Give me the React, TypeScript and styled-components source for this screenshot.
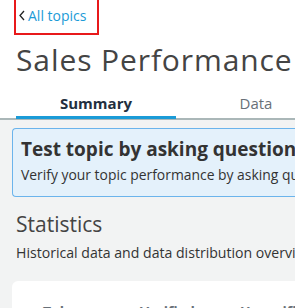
import React from 'react';
import styled, { createGlobalStyle } from 'styled-components';

const GlobalStyle = createGlobalStyle`
  html, body {
    margin: 0;
    padding: 0;
    background: #f2f3f3;
    font-family: 'Open Sans', 'Noto Sans', sans-serif;
    overflow: hidden;
  }
`;

const Page = styled.div`
  width: 295px;
  height: 308px;
  overflow: hidden;
`;

const Header = styled.header`
  background: #ffffff;
  padding: 0 0 0 16px;
  border-bottom: 2px solid #aab7b8;
  white-space: nowrap;
`;

const BackLink = styled.a`
  display: inline-flex;
  align-items: center;
  gap: 3px;
  margin-left: -2px;
  padding: 5px 11px 7px 3px;
  border: 2px solid #e8191b;
  border-top: none;
  color: #1b9bd7;
  font-size: 14px;
  line-height: 21px;
  text-decoration: none;
`;

const Title = styled.h1`
  margin: 7px 0 0;
  font-size: 30px;
  font-weight: 400;
  letter-spacing: 0.9px;
  line-height: 36px;
  color: #444444;
`;

const Tabs = styled.div`
  display: flex;
  margin-top: 15px;
`;

const Tab = styled.div<{ $active?: boolean }>`
  flex: 0 0 160px;
  text-align: center;
  font-size: 15px;
  line-height: 20px;
  font-weight: ${(p) => (p.$active ? 700 : 400)};
  color: ${(p) => (p.$active ? '#232f3e' : '#687078')};
  padding-bottom: 3px;
  border-bottom: 3px solid ${(p) => (p.$active ? '#1b9bd7' : 'transparent')};
  margin-bottom: -1px;
`;

const Body = styled.main`
  padding: 8px 0 0 12px;
`;

const Callout = styled.section`
  background: #e4f1fb;
  border: 1px solid #6bb4ec;
  border-right: none;
  border-radius: 4px 0 0 4px;
  padding: 7px 0 11px 8px;
  white-space: nowrap;
  overflow: hidden;
`;

const CalloutTitle = styled.h2`
  margin: 0;
  font-size: 19px;
  font-weight: 700;
  line-height: 26px;
  color: #333333;
`;

const CalloutText = styled.p`
  margin: 3px 0 0;
  font-size: 13.9px;
  line-height: 20px;
  color: #333333;
`;

const Section = styled.section`
  margin-top: 13px;
  padding-left: 4px;
  white-space: nowrap;
  overflow: hidden;
`;

const SectionTitle = styled.h2`
  margin: 0;
  font-size: 21px;
  font-weight: 400;
  line-height: 28px;
  color: #444444;
`;

const SectionText = styled.p`
  margin: 5px 0 0;
  font-size: 14.1px;
  line-height: 20px;
  color: #333333;
`;

const Card = styled.div`
  margin-top: 18px;
  background: #ffffff;
  border-radius: 6px 0 0 0;
  padding: 21px 0 0 31px;
  display: grid;
  grid-template-columns: 97px 100px 100px;
  white-space: nowrap;
`;

const Stat = styled.span`
  font-size: 14px;
  font-weight: 700;
  color: #687078;
`;

export default function App() {
  return (
    <Page>
      <GlobalStyle />
      <Header>
        <BackLink href="#">
          <svg width="6" height="11" viewBox="0 0 6 11">
            <path d="M5 1 L1 5.5 L5 10" fill="none" stroke="#222" strokeWidth="1.3" />
          </svg>
          All topics
        </BackLink>
        <Title>Sales Performance</Title>
        <Tabs>
          <Tab $active>Summary</Tab>
          <Tab>Data</Tab>
        </Tabs>
      </Header>
      <Body>
        <Callout>
          <CalloutTitle>Test topic by asking questions</CalloutTitle>
          <CalloutText>Verify your topic performance by asking questions</CalloutText>
        </Callout>
        <Section>
          <SectionTitle>Statistics</SectionTitle>
          <SectionText>Historical data and data distribution overview</SectionText>
        </Section>
        <Card>
          <Stat>Tokens</Stat>
          <Stat>Verified</Stat>
          <Stat>Unverified</Stat>
        </Card>
      </Body>
    </Page>
  );
}
